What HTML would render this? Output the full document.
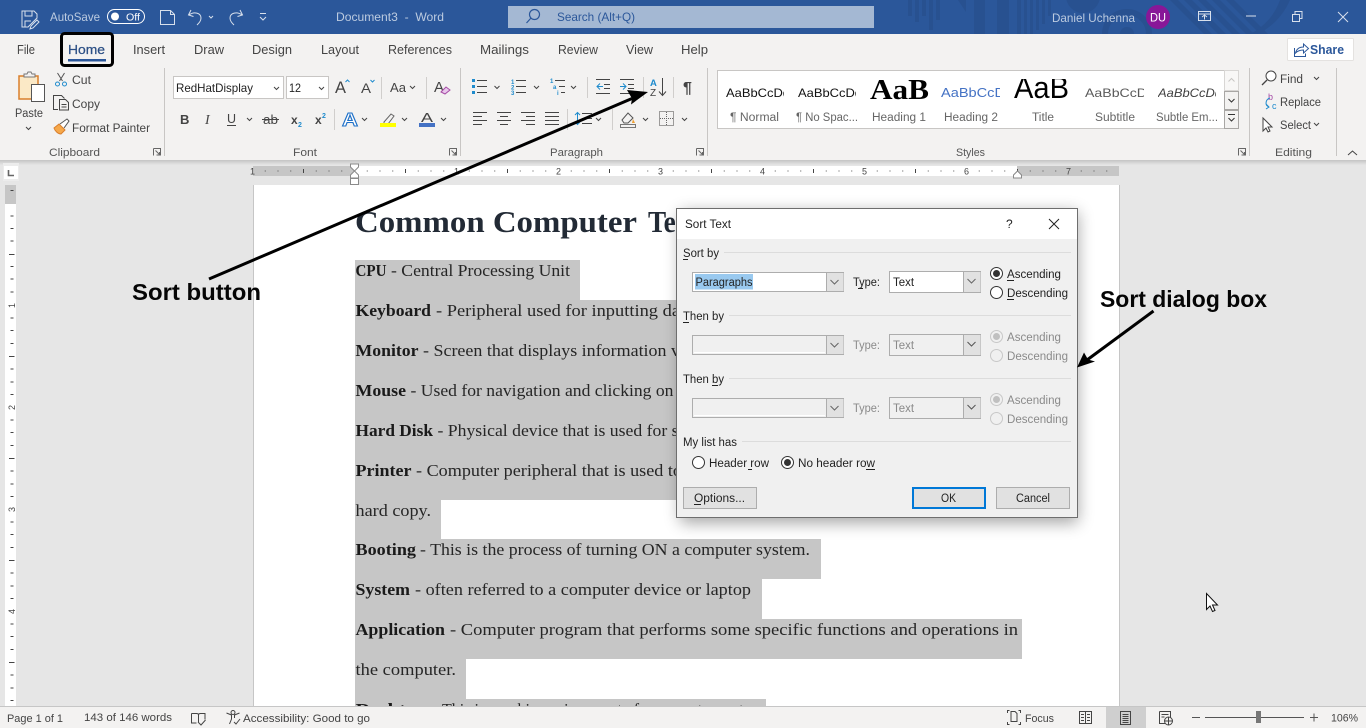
<!DOCTYPE html>
<html lang="en"><head><meta charset="utf-8"><title>Document3 - Word</title>
<style>
html,body{margin:0;padding:0;width:1366px;height:728px;overflow:hidden;background:#e6e6e6}
svg{display:block}
text{font-family:"Liberation Sans",sans-serif;font-size:12px;fill:#444;white-space:pre}
.t{fill:#bccbe0}
.tab{font-size:12.5px;fill:#444}
.r{fill:#444;font-size:11.5px}
.g{fill:#555;font-size:11px}
.s{fill:#666;font-size:11.5px}
.d{font-family:"Liberation Serif",serif;font-size:17px;fill:#262626}
.b{font-family:"Liberation Serif",serif;font-size:17px;font-weight:bold;fill:#1a1a1a}
.dl{fill:#222;font-size:11.5px}
.dd{fill:#8a8a8a;font-size:11.5px}
.an{font-weight:bold;font-size:23px;fill:#050505}
.st{fill:#444;font-size:11px}
.ln{stroke:#444;stroke-width:1;fill:none}
.bl{stroke:#1e8bcd;stroke-width:1;fill:none}
.ch{stroke:#444;stroke-width:1;fill:none}
.w{stroke:#d8e0ec;stroke-width:1;fill:none}
</style></head><body>
<svg width="1366" height="728" viewBox="0 0 1366 728" xmlns="http://www.w3.org/2000/svg">
<defs>
<filter id="sh" x="-10%" y="-10%" width="120%" height="120%"><feGaussianBlur stdDeviation="8"/></filter>
<linearGradient id="rs" x1="0" y1="0" x2="0" y2="1"><stop offset="0" stop-color="#c4c4c4"/><stop offset="1" stop-color="#e6e6e6"/></linearGradient>
<clipPath id="pc"><rect x="0" y="185" width="1366" height="522"/></clipPath>
<clipPath id="c1"><rect x="726" y="72" width="58" height="40"/></clipPath>
<clipPath id="c2"><rect x="798" y="72" width="58" height="40"/></clipPath>
<clipPath id="c3"><rect x="941" y="72" width="59" height="40"/></clipPath>
<clipPath id="c4"><rect x="1085" y="72" width="59" height="40"/></clipPath>
<clipPath id="c5"><rect x="1158" y="72" width="58" height="40"/></clipPath>
<clipPath id="c6"><rect x="1012" y="79" width="60" height="30"/></clipPath>
<clipPath id="c7"><rect x="868" y="72" width="63" height="36"/></clipPath>
<clipPath id="tb"><rect x="0" y="0" width="1366" height="34"/></clipPath>
</defs>

<!-- workspace -->
<rect width="1366" height="728" fill="#e6e6e6"/>

<!-- title bar -->
<rect width="1366" height="34" fill="#2b579a"/>
<g clip-path="url(#tb)" fill="#285190">
<rect x="908" y="0" width="4" height="16"/><rect x="915" y="0" width="4" height="22"/><rect x="922" y="0" width="4" height="16"/><rect x="929" y="0" width="4" height="30"/><rect x="936" y="0" width="4" height="20"/>
<rect x="974" y="0" width="11" height="34"/><rect x="997" y="0" width="12" height="34"/><rect x="1017" y="0" width="4" height="34"/><rect x="1024" y="0" width="3" height="34"/><rect x="1030" y="0" width="3" height="34"/><rect x="1036" y="0" width="3" height="30"/><rect x="1042" y="0" width="3" height="24"/><rect x="1048" y="0" width="3" height="16"/>
<circle cx="1083" cy="-4" r="17"/>
<path d="M958 0h8v12z"/>
<circle cx="1127" cy="34" r="22" fill="none" stroke="#285190" stroke-width="6"/>
<circle cx="1127" cy="34" r="7"/>
<path d="M1170 0h8l34 34h-8zM1184 0h8l34 34h-8zM1198 0h8l34 34h-8zM1212 0h8l34 34h-8zM1226 0h8l34 34h-8z"/>
<path d="M1250 34a60 60 0 0 0 30-34h10a70 70 0 0 1-32 34z"/>
</g>
<path d="M22 11h12l3 3v4l-6 6-3 3h-6z" class="w" stroke-width="1"/><path d="M25 11v5h7v-5M25 27v-6h6" class="w"/><path d="M31 26l6-6 2 2-6 6-3 1z" class="w"/>
<text x="50" y="21" class="t" textLength="50" lengthAdjust="spacingAndGlyphs">AutoSave</text>
<rect x="107.500" y="9.500" width="37" height="14" rx="7" fill="none" stroke="#fff"/>
<circle cx="115" cy="16.500" r="4" fill="#fff"/>
<text x="126" y="20.500" style="font-size:10.500px;fill:#fff" textLength="14" lengthAdjust="spacingAndGlyphs">Off</text>
<path d="M160.500 10.500h10l4 4v10h-14zM170.500 10.500v4h4" class="w"/>
<path d="M191 10l-2.500 5 5 1.500M189 15c5-4 12-2 12 3 0 3-2 5-4 7" class="w"/>
<path d="M209 16l2 2 2-2" class="w"/>
<path d="M240 10l2.500 5-5 1.500M242 15c-5-4-12-2-12 3 0 3 2 5 4 7" class="w"/>
<path d="M260 13.500h6M260 17l3 3 3-3" class="w"/>
<text x="336" y="21" class="t" textLength="108" lengthAdjust="spacingAndGlyphs">Document3  -  Word</text>
<rect x="508" y="6" width="366" height="22" fill="#a4b8d3"/>
<circle cx="534.500" cy="14.500" r="5" fill="none" stroke="#2b579a" stroke-width="1.200"/><path d="M531 18l-4.500 5" stroke="#2b579a" stroke-width="1.200"/>
<text x="557" y="21" style="fill:#2b579a" textLength="78" lengthAdjust="spacingAndGlyphs">Search (Alt+Q)</text>
<text x="1052" y="22" class="t" textLength="83" lengthAdjust="spacingAndGlyphs">Daniel Uchenna</text>
<circle cx="1158" cy="17" r="12" fill="#881798"/>
<text x="1150" y="21.500" style="fill:#fff;font-size:11.500px" textLength="16" lengthAdjust="spacingAndGlyphs">DU</text>
<path d="M1198.500 11.500h12v9h-12zM1198.500 14h12M1204.500 19.500v-4M1202 17l2.500-2 2.500 2" class="w"/>
<path d="M1246 16h10" class="w"/>
<path d="M1292.500 14.500h7v7h-7zM1295 14v-2.500h7v7h-2.500" class="w"/>
<path d="M1338 12l10 10M1348 12l-10 10" class="w"/>

<!-- ribbon -->
<rect y="34" width="1366" height="127" fill="#f3f2f1"/>
<rect y="160" width="1366" height="5" fill="url(#rs)"/>
<text x="17" y="54" class="tab" textLength="18" lengthAdjust="spacingAndGlyphs">File</text>
<text x="68" y="54" class="tab" style="fill:#2b4f85;stroke:#2b4f85;stroke-width:.25" textLength="37" lengthAdjust="spacingAndGlyphs">Home</text>
<text x="133" y="54" class="tab" textLength="32" lengthAdjust="spacingAndGlyphs">Insert</text>
<text x="194" y="54" class="tab" textLength="30" lengthAdjust="spacingAndGlyphs">Draw</text>
<text x="252" y="54" class="tab" textLength="40" lengthAdjust="spacingAndGlyphs">Design</text>
<text x="321" y="54" class="tab" textLength="38" lengthAdjust="spacingAndGlyphs">Layout</text>
<text x="388" y="54" class="tab" textLength="64" lengthAdjust="spacingAndGlyphs">References</text>
<text x="480" y="54" class="tab" textLength="49" lengthAdjust="spacingAndGlyphs">Mailings</text>
<text x="558" y="54" class="tab" textLength="40" lengthAdjust="spacingAndGlyphs">Review</text>
<text x="626" y="54" class="tab" textLength="27" lengthAdjust="spacingAndGlyphs">View</text>
<text x="681" y="54" class="tab" textLength="27" lengthAdjust="spacingAndGlyphs">Help</text>
<rect x="68" y="59" width="38" height="2.500" fill="#2b579a"/>
<rect x="61.500" y="33.500" width="51" height="32" rx="3" fill="none" stroke="#000" stroke-width="3"/>
<rect x="1287.500" y="38.500" width="66" height="22" rx="1" fill="#fff" stroke="#e4e2e0"/>
<path d="M1294.500 48v8.500h11v-3M1295.500 53c1-4 4-6 8-6v-3l5 4.500-5 4.500v-3c-3 0-6 1-8 3z" fill="none" stroke="#2b579a"/>
<text x="1310" y="54" style="fill:#2b579a;font-size:13px;font-weight:bold" textLength="34" lengthAdjust="spacingAndGlyphs">Share</text>

<!-- separators -->
<g stroke="#c8c6c4"><path d="M164.500 68v88M460.500 68v88M707.500 68v88M1249.500 68v88M1336.500 68v88"/></g>

<!-- clipboard -->
<rect x="19" y="76" width="19" height="23" fill="#fbe9c6" stroke="#d97f2c" stroke-width="1.500"/>
<path d="M24 76v-2h3l1-2h3l1 2h3v3H24z" fill="#f3f2f1" stroke="#777"/>
<rect x="31.500" y="84.500" width="13" height="17" fill="#fff" stroke="#555"/>
<text x="15" y="117" class="r" textLength="28" lengthAdjust="spacingAndGlyphs">Paste</text>
<path d="M26 127l2.500 2.500 2.500-2.500" class="ch"/>
<path d="M57.500 73l5 8M64.500 73l-5 8" stroke="#555" fill="none"/><circle cx="57.500" cy="84" r="2" fill="none" stroke="#1e8bcd"/><circle cx="64.500" cy="84" r="2" fill="none" stroke="#1e8bcd"/>
<text x="72" y="84" class="r" textLength="19" lengthAdjust="spacingAndGlyphs">Cut</text>
<path d="M58 109.500h-4.500v-14h8l3 3M59.500 99.500h6l3 3v7.500h-9zM61.500 104.500h5M61.500 107h5" class="ln"/>
<text x="72" y="108" class="r" textLength="28" lengthAdjust="spacingAndGlyphs">Copy</text>
<path d="M54 128l5-4 6 6-4 4c-3 0-6-3-7-6z" fill="#f6a84a" stroke="#d97f2c"/><path d="M60 124l7-5 2 2-5 7" fill="#fff" stroke="#555"/>
<text x="72" y="132" class="r" textLength="78" lengthAdjust="spacingAndGlyphs">Format Painter</text>
<text x="49" y="156" class="g" textLength="51" lengthAdjust="spacingAndGlyphs">Clipboard</text>
<path d="M153.500 148.500h7v7M153.500 155.500v-7M155.500 150.500l4 4M159.500 152v3h-3" stroke="#666" fill="none"/>

<!-- font -->
<rect x="173.500" y="76.500" width="110" height="22" fill="#fff" stroke="#c8c6c4"/>
<text x="176" y="92" style="font-size:12px;fill:#222" textLength="77" lengthAdjust="spacingAndGlyphs">RedHatDisplay</text>
<path d="M274 87l2.500 2.500 2.500-2.500" class="ch"/>
<rect x="286.500" y="76.500" width="42" height="22" fill="#fff" stroke="#c8c6c4"/>
<text x="289" y="92" style="font-size:12px;fill:#222" textLength="12" lengthAdjust="spacingAndGlyphs">12</text>
<path d="M319 87l2.500 2.500 2.500-2.500" class="ch"/>
<text x="335" y="93" style="font-size:17px;fill:#444" textLength="11" lengthAdjust="spacingAndGlyphs">A</text>
<path d="M345.500 82l2-2 2 2" stroke="#1e8bcd" fill="none"/>
<text x="361" y="93" style="font-size:14px;fill:#444" textLength="10" lengthAdjust="spacingAndGlyphs">A</text>
<path d="M370.500 80l2 2 2-2" stroke="#1e8bcd" fill="none"/>
<path d="M381.500 77v22" stroke="#d0cecc"/>
<text x="390" y="92" style="font-size:13px;fill:#444" textLength="16" lengthAdjust="spacingAndGlyphs">Aa</text>
<path d="M410 86l2.500 2.500 2.500-2.500" class="ch"/>
<path d="M426.500 77v22" stroke="#d0cecc"/>
<text x="434" y="92" style="font-size:15px;fill:#444" textLength="10" lengthAdjust="spacingAndGlyphs">A</text>
<path d="M441 92l5-5 4 3-5 4z" fill="#e9c8ec" stroke="#a64ca6"/>
<text x="180" y="124" style="font-size:13px;font-weight:bold;fill:#444">B</text>
<text x="205" y="124" style="font-family:'Liberation Serif',serif;font-size:14px;font-style:italic;fill:#444">I</text>
<text x="227" y="123" style="font-size:12.500px;fill:#444">U</text>
<path d="M227 125.500h9" stroke="#444"/>
<path d="M247 118l2.500 2.500 2.500-2.500" class="ch"/>
<text x="263" y="124" style="font-size:13px;fill:#444" textLength="15" lengthAdjust="spacingAndGlyphs">ab</text>
<path d="M262 119.500h17" stroke="#444"/>
<text x="291" y="124" style="font-size:12px;font-weight:bold;fill:#444">x</text><text x="298" y="127" style="font-size:7px;fill:#1e8bcd;font-weight:bold">2</text>
<text x="315" y="124" style="font-size:12px;font-weight:bold;fill:#444">x</text><text x="322" y="118" style="font-size:7px;fill:#1e8bcd;font-weight:bold">2</text>
<path d="M334.500 109v21" stroke="#d0cecc"/>
<text x="342" y="126" style="font-size:18px;font-weight:bold;fill:#fff;stroke:#1e70c8;stroke-width:1" textLength="16" lengthAdjust="spacingAndGlyphs">A</text>
<path d="M362 118l2.500 2.500 2.500-2.500" class="ch"/>
<path d="M384 122l7-8 3 2-6 8-4 1z" fill="none" stroke="#666"/>
<rect x="380" y="123" width="16" height="4" fill="#ffff00"/>
<path d="M402 118l2.500 2.500 2.500-2.500" class="ch"/>
<text x="421" y="122" style="font-size:13px;fill:#444" textLength="12" lengthAdjust="spacingAndGlyphs">A</text>
<rect x="419" y="123" width="16" height="4" fill="#4472c4"/>
<path d="M441 118l2.500 2.500 2.500-2.500" class="ch"/>
<text x="293" y="156" class="g" textLength="24" lengthAdjust="spacingAndGlyphs">Font</text>
<path d="M449.500 148.500h7v7M449.500 155.500v-7M451.500 150.500l4 4M455.500 152v3h-3" stroke="#666" fill="none"/>

<!-- paragraph -->
<g fill="#1e8bcd"><rect x="472" y="79" width="3" height="3"/><rect x="472" y="85" width="3" height="3"/><rect x="472" y="91" width="3" height="3"/></g>
<path d="M477 80.500h10M477 86.500h10M477 92.500h10" class="ln"/>
<path d="M494.500 86l2.500 2.500 2.500-2.500" class="ch"/>
<text x="511" y="84" style="font-size:6px;fill:#1e8bcd;font-weight:bold">1</text><text x="511" y="89.500" style="font-size:6px;fill:#1e8bcd;font-weight:bold">2</text><text x="511" y="95" style="font-size:6px;fill:#1e8bcd;font-weight:bold">3</text>
<path d="M516 80.500h10M516 86.500h10M516 92.500h10" class="ln"/>
<path d="M534 86l2.500 2.500 2.500-2.500" class="ch"/>
<text x="550" y="83" style="font-size:6px;fill:#1e8bcd;font-weight:bold">1</text><text x="553" y="89" style="font-size:6px;fill:#1e8bcd;font-weight:bold">a</text><text x="557" y="95" style="font-size:6px;fill:#1e8bcd;font-weight:bold">i</text>
<path d="M555 80.500h10M559 86.500h6M561 92.500h4" class="ln"/>
<path d="M571 86l2.500 2.500 2.500-2.500" class="ch"/>
<path d="M587.500 77v21" stroke="#d0cecc"/>
<path d="M596 79.500h14M604 84.500h6M604 88.500h6M596 93.500h14" class="ln"/>
<path d="M603 86.500h-6M600 83.500l-3 3 3 3" class="bl"/>
<path d="M620 79.500h14M628 84.500h6M628 88.500h6M620 93.500h14" class="ln"/>
<path d="M620 86.500h6M623 83.500l3 3-3 3" class="bl"/>
<path d="M643.500 77v21" stroke="#d0cecc"/>
<text x="650" y="86" style="font-size:9.500px;font-weight:bold;fill:#1e8bcd">A</text>
<text x="650" y="96" style="font-size:10px;fill:#444">Z</text>
<path d="M662.500 78v17M659 91.500l3.500 4 3.500-4" class="ln"/>
<path d="M673.500 77v21" stroke="#d0cecc"/>
<text x="683" y="93" style="font-size:16px;fill:#444;font-weight:bold">¶</text>
<path d="M473 112.500h14M473 116.500h9M473 120.500h14M473 124.500h9" class="ln"/>
<path d="M497 112.500h14M500 116.500h8M497 120.500h14M500 124.500h8" class="ln"/>
<path d="M521 112.500h14M526 116.500h9M521 120.500h14M526 124.500h9" class="ln"/>
<path d="M545 112.500h14M545 116.500h14M545 120.500h14M545 124.500h14" class="ln"/>
<path d="M567.500 109v21" stroke="#d0cecc"/>
<path d="M577.500 113v11M575 115l2.500-2.500 2.500 2.500M575 122l2.500 2.500 2.500-2.500" class="bl"/>
<path d="M582 113.500h10M582 118.500h10M582 123.500h10" class="ln"/>
<path d="M596 118l2.500 2.500 2.500-2.500" class="ch"/>
<path d="M612.500 109v21" stroke="#d0cecc"/>
<path d="M622 120l6-7 5 5-5 5h-4z" fill="none" stroke="#555"/><path d="M633 119l2 4h-3z" fill="#f0a030"/>
<rect x="620.500" y="124.500" width="15" height="3" fill="none" stroke="#777"/>
<path d="M643 118l2.500 2.500 2.500-2.500" class="ch"/>
<rect x="659.500" y="111.500" width="14" height="14" fill="none" stroke="#444" stroke-dasharray="1 1"/>
<path d="M666.500 112v14M660 118.500h14" stroke="#666" stroke-dasharray="1 1"/>
<path d="M682 118l2.500 2.500 2.500-2.500" class="ch"/>
<text x="550" y="156" class="g" textLength="53" lengthAdjust="spacingAndGlyphs">Paragraph</text>
<path d="M696.500 148.500h7v7M696.500 155.500v-7M698.500 150.500l4 4M702.500 152v3h-3" stroke="#666" fill="none"/>

<!-- styles -->
<rect x="717.500" y="70.500" width="521" height="58" fill="#fff" stroke="#c8c6c4"/>
<text x="726" y="97" clip-path="url(#c1)" style="font-size:12px;fill:#111" textLength="64" lengthAdjust="spacingAndGlyphs">AaBbCcDd</text>
<text x="798" y="97" clip-path="url(#c2)" style="font-size:12px;fill:#111" textLength="64" lengthAdjust="spacingAndGlyphs">AaBbCcDd</text>
<text x="870" y="99" clip-path="url(#c7)" style="font-family:'Liberation Serif',serif;font-size:29px;font-weight:bold;fill:#000" textLength="59" lengthAdjust="spacingAndGlyphs">AaB</text>
<text x="941" y="97" clip-path="url(#c3)" style="font-size:13px;fill:#4472c4" textLength="64" lengthAdjust="spacingAndGlyphs">AaBbCcD</text>
<text x="1014" y="98" clip-path="url(#c6)" style="font-size:31px;fill:#000" textLength="55" lengthAdjust="spacingAndGlyphs">AaB</text>
<text x="1085" y="97" clip-path="url(#c4)" style="font-size:12px;fill:#5a5a5a" textLength="62" lengthAdjust="spacingAndGlyphs">AaBbCcD</text>
<text x="1158" y="97" clip-path="url(#c5)" style="font-size:12px;font-style:italic;fill:#404040" textLength="64" lengthAdjust="spacingAndGlyphs">AaBbCcDd</text>
<text x="730" y="121" class="s" textLength="49" lengthAdjust="spacingAndGlyphs">¶ Normal</text>
<text x="796" y="121" class="s" textLength="62" lengthAdjust="spacingAndGlyphs">¶ No Spac...</text>
<text x="872" y="121" class="s" textLength="54" lengthAdjust="spacingAndGlyphs">Heading 1</text>
<text x="944" y="121" class="s" textLength="54" lengthAdjust="spacingAndGlyphs">Heading 2</text>
<text x="1032" y="121" class="s" textLength="22" lengthAdjust="spacingAndGlyphs">Title</text>
<text x="1095" y="121" class="s" textLength="40" lengthAdjust="spacingAndGlyphs">Subtitle</text>
<text x="1156" y="121" class="s" textLength="62" lengthAdjust="spacingAndGlyphs">Subtle Em...</text>
<rect x="1224.500" y="70.500" width="14" height="20" fill="#f8f7f6" stroke="#d8d6d4"/>
<rect x="1224.500" y="91.500" width="14" height="18" fill="#f3f2f1" stroke="#a8a6a4"/>
<rect x="1224.500" y="110.500" width="14" height="18" fill="#f3f2f1" stroke="#a8a6a4"/>
<path d="M1228.500 81.500l3-3 3 3" stroke="#c8c6c4" fill="none"/>
<path d="M1228.500 99l3 3 3-3" stroke="#333" fill="none"/>
<path d="M1228 114.500h7M1228.500 118l3 3 3-3" stroke="#333" fill="none"/>
<text x="956" y="156" class="g" textLength="29" lengthAdjust="spacingAndGlyphs">Styles</text>
<path d="M1238.500 148.500h7v7M1238.500 155.500v-7M1240.500 150.500l4 4M1244.500 152v3h-3" stroke="#666" fill="none"/>

<!-- editing -->
<circle cx="1271" cy="76" r="5" fill="#fff" stroke="#444"/><path d="M1267 80l-5 5" stroke="#444" stroke-width="1.300"/>
<text x="1280" y="83" class="r" textLength="23" lengthAdjust="spacingAndGlyphs">Find</text>
<path d="M1314 77l2.500 2.500 2.500-2.500" class="ch"/>
<text x="1268" y="100" style="font-size:9px;fill:#a64ca6">b</text>
<text x="1272" y="109" style="font-size:9px;fill:#1e8bcd">c</text>
<path d="M1270 98c-4 1-6 7-1 9M1266 104l3 3-3 2" class="bl"/>
<text x="1280" y="106" class="r" textLength="41" lengthAdjust="spacingAndGlyphs">Replace</text>
<path d="M1263 118v13l3-3 2 4 2-1-2-4h4z" fill="#fff" stroke="#444"/>
<text x="1280" y="129" class="r" textLength="31" lengthAdjust="spacingAndGlyphs">Select</text>
<path d="M1314 123l2.500 2.500 2.500-2.500" class="ch"/>
<text x="1275" y="156" class="g" textLength="37" lengthAdjust="spacingAndGlyphs">Editing</text>
<path d="M1348 155l4.500-4 4.500 4" stroke="#444" fill="none"/>

<!-- rulers -->
<rect x="3" y="163" width="16" height="18" fill="#ececec"/>
<rect x="4" y="166" width="14" height="13" fill="#fff"/>
<path d="M8.500 170v5.500h5.500" stroke="#666" stroke-width="1.600" fill="none"/>
<rect x="253" y="166" width="866" height="10" fill="#fff"/>
<rect x="253" y="166" width="101" height="10" fill="#c6c6c6"/>
<rect x="1017" y="166" width="102" height="10" fill="#c6c6c6"/>
<path d="M264.750 171H1119" stroke="#555" stroke-width="1" stroke-dasharray="1 11.750"/>
<path d="M303 171H1119" stroke="#444" stroke-width="4" stroke-dasharray="1 50"/>
<rect x="253" y="167" width="5" height="8" fill="#c6c6c6"/>
<rect x="451" y="167" width="11" height="8" fill="#fff"/><rect x="553" y="167" width="11" height="8" fill="#fff"/><rect x="655" y="167" width="11" height="8" fill="#fff"/><rect x="757" y="167" width="11" height="8" fill="#fff"/><rect x="859" y="167" width="11" height="8" fill="#fff"/><rect x="961" y="167" width="11" height="8" fill="#fff"/><rect x="1063" y="167" width="11" height="8" fill="#c6c6c6"/>
<text x="250" y="174.500" style="font-size:9px;fill:#444">1</text>
<text x="454" y="174.500" style="font-size:9px;fill:#444">1</text>
<text x="556" y="174.500" style="font-size:9px;fill:#444">2</text>
<text x="658" y="174.500" style="font-size:9px;fill:#444">3</text>
<text x="760" y="174.500" style="font-size:9px;fill:#444">4</text>
<text x="862" y="174.500" style="font-size:9px;fill:#444">5</text>
<text x="964" y="174.500" style="font-size:9px;fill:#444">6</text>
<text x="1066" y="174.500" style="font-size:9px;fill:#444">7</text>
<path d="M350.500 164h8v3l-4 4-4-4zM350.500 178v-3l4-4 4 4v3z" fill="#fff" stroke="#8a8a8a"/>
<rect x="350.500" y="178.500" width="8" height="6" fill="#fff" stroke="#8a8a8a"/>
<path d="M1013.500 178v-3l4-4 4 4v3z" fill="#fff" stroke="#8a8a8a"/>
<rect x="5" y="185" width="11" height="522" fill="#fff"/>
<rect x="5" y="185" width="11" height="19" fill="#c6c6c6"/>
<path d="M12 190v1" stroke="#444" stroke-width="3"/>
<path d="M10.500 216H13.500M10.500 228.500H13.500M10.500 241H13.500M10.500 266.500H13.500M10.500 279H13.500M10.500 292H13.500M10.500 318H13.500M10.500 330.500H13.500M10.500 343.500H13.500M10.500 369H13.500M10.500 382H13.500M10.500 394.500H13.500M10.500 420H13.500M10.500 432.500H13.500M10.500 445.500H13.500M10.500 471H13.500M10.500 484H13.500M10.500 496.500H13.500M10.500 522H13.500M10.500 534.500H13.500M10.500 547.500H13.500M10.500 573H13.500M10.500 586H13.500M10.500 598.500H13.500M10.500 624H13.500M10.500 636.500H13.500M10.500 649.500H13.500M10.500 675H13.500M10.500 688H13.500M10.500 700.500H13.500" stroke="#444"/>
<path d="M9 254.500H14.500M9 356.500H14.500M9 458.500H14.500M9 560.500H14.500M9 662.500H14.500" stroke="#444"/>
<text transform="translate(15,308) rotate(-90)" style="font-size:9px;fill:#444">1</text>
<text transform="translate(15,410) rotate(-90)" style="font-size:9px;fill:#444">2</text>
<text transform="translate(15,512) rotate(-90)" style="font-size:9px;fill:#444">3</text>
<text transform="translate(15,614) rotate(-90)" style="font-size:9px;fill:#444">4</text>

<!-- page -->
<g clip-path="url(#pc)">
<rect x="253" y="185" width="867" height="522" fill="#c6c6c6"/>
<rect x="254" y="185" width="865" height="522" fill="#fff"/>
<g fill="#c6c6c6">
<rect x="355" y="260" width="225" height="40"/>
<rect x="355" y="300" width="660" height="200"/>
<rect x="355" y="500" width="86" height="39"/>
<rect x="355" y="539" width="466" height="40"/>
<rect x="355" y="579" width="407" height="40"/>
<rect x="355" y="619" width="667" height="40"/>
<rect x="355" y="659" width="111" height="40"/>
<rect x="355" y="699" width="411" height="10"/>
</g>
<text x="355" y="232" style="font-family:'Liberation Serif',serif;font-size:31px;font-weight:bold;fill:#222a35" textLength="282" lengthAdjust="spacingAndGlyphs">Common Computer</text>
<text x="648" y="232" style="font-family:'Liberation Serif',serif;font-size:31px;font-weight:bold;fill:#222a35" textLength="73" lengthAdjust="spacingAndGlyphs">Terms</text>
<text x="355.500" y="276" class="b" textLength="31" lengthAdjust="spacingAndGlyphs">CPU</text><text x="391" y="276" class="d" textLength="179" lengthAdjust="spacingAndGlyphs">- Central Processing Unit</text>
<text x="355.500" y="316" class="b" textLength="75.500" lengthAdjust="spacingAndGlyphs">Keyboard</text><text x="436" y="316" class="d" textLength="244" lengthAdjust="spacingAndGlyphs">- Peripheral used for inputting da</text>
<text x="355.500" y="356" class="b" textLength="63" lengthAdjust="spacingAndGlyphs">Monitor</text><text x="423" y="356" class="d" textLength="257" lengthAdjust="spacingAndGlyphs">- Screen that displays information v</text>
<text x="355.500" y="396" class="b" textLength="50.500" lengthAdjust="spacingAndGlyphs">Mouse</text><text x="410.500" y="396" class="d" textLength="263" lengthAdjust="spacingAndGlyphs">- Used for navigation and clicking on</text>
<text x="355.500" y="436" class="b" textLength="77.500" lengthAdjust="spacingAndGlyphs">Hard Disk</text><text x="437.500" y="436" class="d" textLength="241" lengthAdjust="spacingAndGlyphs">- Physical device that is used for s</text>
<text x="355.500" y="476" class="b" textLength="56" lengthAdjust="spacingAndGlyphs">Printer</text><text x="416" y="476" class="d" textLength="266" lengthAdjust="spacingAndGlyphs">- Computer peripheral that is used to</text>
<text x="355.500" y="516" class="d" textLength="75.500" lengthAdjust="spacingAndGlyphs">hard copy.</text>
<text x="355.500" y="555" class="b" textLength="60.500" lengthAdjust="spacingAndGlyphs">Booting</text><text x="420" y="555" class="d" textLength="390" lengthAdjust="spacingAndGlyphs">- This is the process of turning ON a computer system.</text>
<text x="355.500" y="595" class="b" textLength="54.500" lengthAdjust="spacingAndGlyphs">System</text><text x="415" y="595" class="d" textLength="336" lengthAdjust="spacingAndGlyphs">- often referred to a computer device or laptop</text>
<text x="355.500" y="635" class="b" textLength="89.500" lengthAdjust="spacingAndGlyphs">Application</text><text x="450" y="635" class="d" textLength="568" lengthAdjust="spacingAndGlyphs">- Computer program that performs some specific functions and operations in</text>
<text x="355.500" y="675" class="d" textLength="100.500" lengthAdjust="spacingAndGlyphs">the computer.</text>
<text x="355.500" y="715" class="b" textLength="72" lengthAdjust="spacingAndGlyphs">Desktop</text><text x="433" y="715" class="d" textLength="330" lengthAdjust="spacingAndGlyphs">- This is graphic environment of a computer system</text>
</g>

<!-- status bar -->
<rect y="707" width="1366" height="21" fill="#f3f2f1"/>
<path d="M0 706.500H1366" stroke="#c6c6c6"/>
<text x="7" y="722" class="st" textLength="56" lengthAdjust="spacingAndGlyphs">Page 1 of 1</text>
<text x="84" y="721" class="st" textLength="88" lengthAdjust="spacingAndGlyphs">143 of 146 words</text>
<path d="M191.500 713.500h5c1 0 2 .5 2 1.500 0-1 1-1.500 2-1.500h4.500v6M191.500 713.500v9.500h5M198.500 715v7M198 722l3 3 4.500-5" class="ln"/>
<circle cx="233" cy="712.500" r="2" fill="none" stroke="#444"/><path d="M226.500 713l5 2v4l-2 5M239.500 713l-5 2v3M234 722l2 2 4-5" class="ln"/>
<text x="243" y="722" class="st" textLength="127" lengthAdjust="spacingAndGlyphs">Accessibility: Good to go</text>
<path d="M1007.500 713v-2.500h2M1007.500 722v2.500h2M1020.500 713v-2.500h-2M1020.500 722v2.500h-2M1011 711.500h4l2 2v8h-6z" class="ln"/>
<text x="1025" y="722" class="st" textLength="29" lengthAdjust="spacingAndGlyphs">Focus</text>
<path d="M1079.500 711.500h12v12h-12zM1085.500 711.500v12M1081 714.500h3M1081 717.500h3M1081 720.500h3M1087 714.500h3M1087 717.500h3M1087 720.500h3" class="ln"/>
<rect x="1106" y="707" width="40" height="21" fill="#cfcfcf"/>
<path d="M1120.500 711.500h10v13h-10zM1122.500 714.500h6M1122.500 716.500h6M1122.500 718.500h6M1122.500 720.500h6M1122.500 722.500h6" class="ln"/>
<path d="M1159.500 711.500h11v8M1159.500 711.500v12h6M1161.500 714.500h7M1161.500 717h3" class="ln"/>
<circle cx="1168.500" cy="721" r="4" fill="#f3f2f1" stroke="#444"/><path d="M1164.500 721h8M1168.500 717v8" class="ln"/>
<path d="M1192 717.500h8M1205 717.500h99M1310 717.500h8M1314 713.500v8" stroke="#555" fill="none"/>
<rect x="1256" y="711" width="5" height="12" fill="#777"/>
<text x="1331" y="721.500" class="st" textLength="27" lengthAdjust="spacingAndGlyphs">106%</text>

<!-- cursor -->
<path d="M1206.500 593.500v16l3.500-3.500 2.500 5.500 2.500-1-2.500-5.500h5z" fill="#fff" stroke="#111" stroke-width="1"/>

<!-- dialog -->
<rect x="680" y="212" width="398" height="311" fill="#000" opacity=".35" filter="url(#sh)"/>
<rect x="676.500" y="208.500" width="401" height="309" fill="#f0f0f0" stroke="#6e6e6e"/>
<rect x="677" y="209" width="400" height="30" fill="#fff"/>
<text x="685" y="228" class="dl" textLength="46" lengthAdjust="spacingAndGlyphs">Sort Text</text>
<text x="1006" y="228" style="font-size:12px;fill:#222">?</text>
<path d="M1049 219l10 10M1059 219l-10 10" stroke="#222" fill="none"/>

<text x="683" y="257" class="dl" textLength="36" lengthAdjust="spacingAndGlyphs">Sort by</text>
<path d="M683 259.500h5" stroke="#222"/>
<path d="M724 252.500H1071M729 315.500H1071M729 378.500H1071M742 441.500H1071" stroke="#dcdcdc"/>
<text x="683" y="320" class="dl" textLength="41" lengthAdjust="spacingAndGlyphs">Then by</text>
<path d="M683 322.500h6" stroke="#222"/>
<text x="683" y="383" class="dl" textLength="41" lengthAdjust="spacingAndGlyphs">Then by</text>
<path d="M712 385.500h6" stroke="#222"/>
<text x="683" y="446" class="dl" textLength="54" lengthAdjust="spacingAndGlyphs">My list has</text>

<!-- row 1 -->
<rect x="692.500" y="272.500" width="151" height="19" fill="#fff" stroke="#adadad"/>
<rect x="826" y="273" width="17.500" height="18" fill="#e1e1e1"/>
<path d="M826.500 273v18" stroke="#adadad"/>
<path d="M830.500 280l4 4 4-4" stroke="#666" fill="none"/>
<rect x="695" y="274" width="58" height="15.500" fill="#99c9ef"/>
<text x="695.500" y="286" class="dl" textLength="57" lengthAdjust="spacingAndGlyphs">Paragraphs</text>
<text x="853" y="286" class="dl" textLength="27" lengthAdjust="spacingAndGlyphs">Type:</text><path d="M858 288.500h5" stroke="#222"/>
<rect x="889.500" y="271.500" width="91" height="21" fill="#fff" stroke="#adadad"/>
<rect x="964" y="272" width="16.500" height="20" fill="#e1e1e1"/>
<path d="M963.500 272v20" stroke="#adadad"/>
<path d="M967.500 279l4 4 4-4" stroke="#666" fill="none"/>
<text x="893" y="286" class="dl" textLength="21" lengthAdjust="spacingAndGlyphs">Text</text>
<circle cx="996.500" cy="273.500" r="6" fill="#fff" stroke="#333"/><circle cx="996.500" cy="273.500" r="3.500" fill="#333"/>
<text x="1007" y="278" class="dl" textLength="54" lengthAdjust="spacingAndGlyphs">Ascending</text><path d="M1007 280.500h7" stroke="#222"/>
<circle cx="996.500" cy="292.500" r="6" fill="#fff" stroke="#333"/>
<text x="1007" y="297" class="dl" textLength="61" lengthAdjust="spacingAndGlyphs">Descending</text><path d="M1007 299.500h7" stroke="#222"/>

<!-- row 2 -->
<rect x="692.500" y="335.500" width="151" height="19" fill="#f0f0f0" stroke="#adadad"/>
<path d="M694 352.500h131" stroke="#fff"/>
<rect x="826" y="336" width="17.500" height="18" fill="#e1e1e1"/>
<path d="M826.500 336v18" stroke="#adadad"/>
<path d="M830.500 343l4 4 4-4" stroke="#666" fill="none"/>
<text x="853" y="349" class="dd" textLength="27" lengthAdjust="spacingAndGlyphs">Type:</text>
<rect x="889.500" y="334.500" width="91" height="21" fill="#f0f0f0" stroke="#adadad"/>
<rect x="964" y="335" width="16.500" height="20" fill="#e1e1e1"/>
<path d="M963.500 335v20" stroke="#adadad"/>
<path d="M967.500 342l4 4 4-4" stroke="#555" fill="none"/>
<text x="893" y="349" class="dd" textLength="21" lengthAdjust="spacingAndGlyphs">Text</text>
<circle cx="996.500" cy="336.500" r="6" fill="#f0f0f0" stroke="#c8c8c8"/><circle cx="996.500" cy="336.500" r="3.500" fill="#c0c0c0"/>
<text x="1007" y="341" class="dd" textLength="54" lengthAdjust="spacingAndGlyphs">Ascending</text>
<circle cx="996.500" cy="355.500" r="6" fill="#f0f0f0" stroke="#c8c8c8"/>
<text x="1007" y="360" class="dd" textLength="61" lengthAdjust="spacingAndGlyphs">Descending</text>

<!-- row 3 -->
<rect x="692.500" y="398.500" width="151" height="19" fill="#f0f0f0" stroke="#adadad"/>
<path d="M694 415.500h131" stroke="#fff"/>
<rect x="826" y="399" width="17.500" height="18" fill="#e1e1e1"/>
<path d="M826.500 399v18" stroke="#adadad"/>
<path d="M830.500 406l4 4 4-4" stroke="#666" fill="none"/>
<text x="853" y="412" class="dd" textLength="27" lengthAdjust="spacingAndGlyphs">Type:</text>
<rect x="889.500" y="397.500" width="91" height="21" fill="#f0f0f0" stroke="#adadad"/>
<rect x="964" y="398" width="16.500" height="20" fill="#e1e1e1"/>
<path d="M963.500 398v20" stroke="#adadad"/>
<path d="M967.500 405l4 4 4-4" stroke="#555" fill="none"/>
<text x="893" y="412" class="dd" textLength="21" lengthAdjust="spacingAndGlyphs">Text</text>
<circle cx="996.500" cy="399.500" r="6" fill="#f0f0f0" stroke="#c8c8c8"/><circle cx="996.500" cy="399.500" r="3.500" fill="#c0c0c0"/>
<text x="1007" y="404" class="dd" textLength="54" lengthAdjust="spacingAndGlyphs">Ascending</text>
<circle cx="996.500" cy="418.500" r="6" fill="#f0f0f0" stroke="#c8c8c8"/>
<text x="1007" y="423" class="dd" textLength="61" lengthAdjust="spacingAndGlyphs">Descending</text>

<circle cx="698.500" cy="462.500" r="6" fill="#fff" stroke="#333"/>
<text x="709" y="467" class="dl" textLength="60" lengthAdjust="spacingAndGlyphs">Header row</text><path d="M748 469.500h4" stroke="#222"/>
<circle cx="787.500" cy="462.500" r="6" fill="#fff" stroke="#333"/><circle cx="787.500" cy="462.500" r="3.500" fill="#333"/>
<text x="798" y="467" class="dl" textLength="77" lengthAdjust="spacingAndGlyphs">No header row</text><path d="M866 469.500h9" stroke="#222"/>

<rect x="683.500" y="487.500" width="73" height="21" fill="#e1e1e1" stroke="#adadad"/>
<text x="694" y="502" class="dl" textLength="51" lengthAdjust="spacingAndGlyphs">Options...</text><path d="M694 504.500h7" stroke="#222"/>
<rect x="913" y="488" width="72" height="20" fill="#e1e1e1" stroke="#0078d7" stroke-width="2"/>
<text x="941" y="502" class="dl" textLength="15" lengthAdjust="spacingAndGlyphs">OK</text>
<rect x="996.500" y="487.500" width="73" height="21" fill="#e1e1e1" stroke="#adadad"/>
<text x="1016" y="502" class="dl" textLength="34" lengthAdjust="spacingAndGlyphs">Cancel</text>

<!-- annotations -->
<path d="M209 279L632 98.500" stroke="#000" stroke-width="3" fill="none"/>
<path d="M648 92L627 90l5 8.500-1 6z" fill="#000"/>
<path d="M1153.500 311L1087 360" stroke="#000" stroke-width="3" fill="none"/>
<path d="M1077 367.500L1084 352.500l4 7 7 2z" fill="#000"/>
<text x="132" y="300" class="an" textLength="129" lengthAdjust="spacingAndGlyphs">Sort button</text>
<text x="1100" y="307" class="an" textLength="167" lengthAdjust="spacingAndGlyphs">Sort dialog box</text>
</svg>
</body></html>
